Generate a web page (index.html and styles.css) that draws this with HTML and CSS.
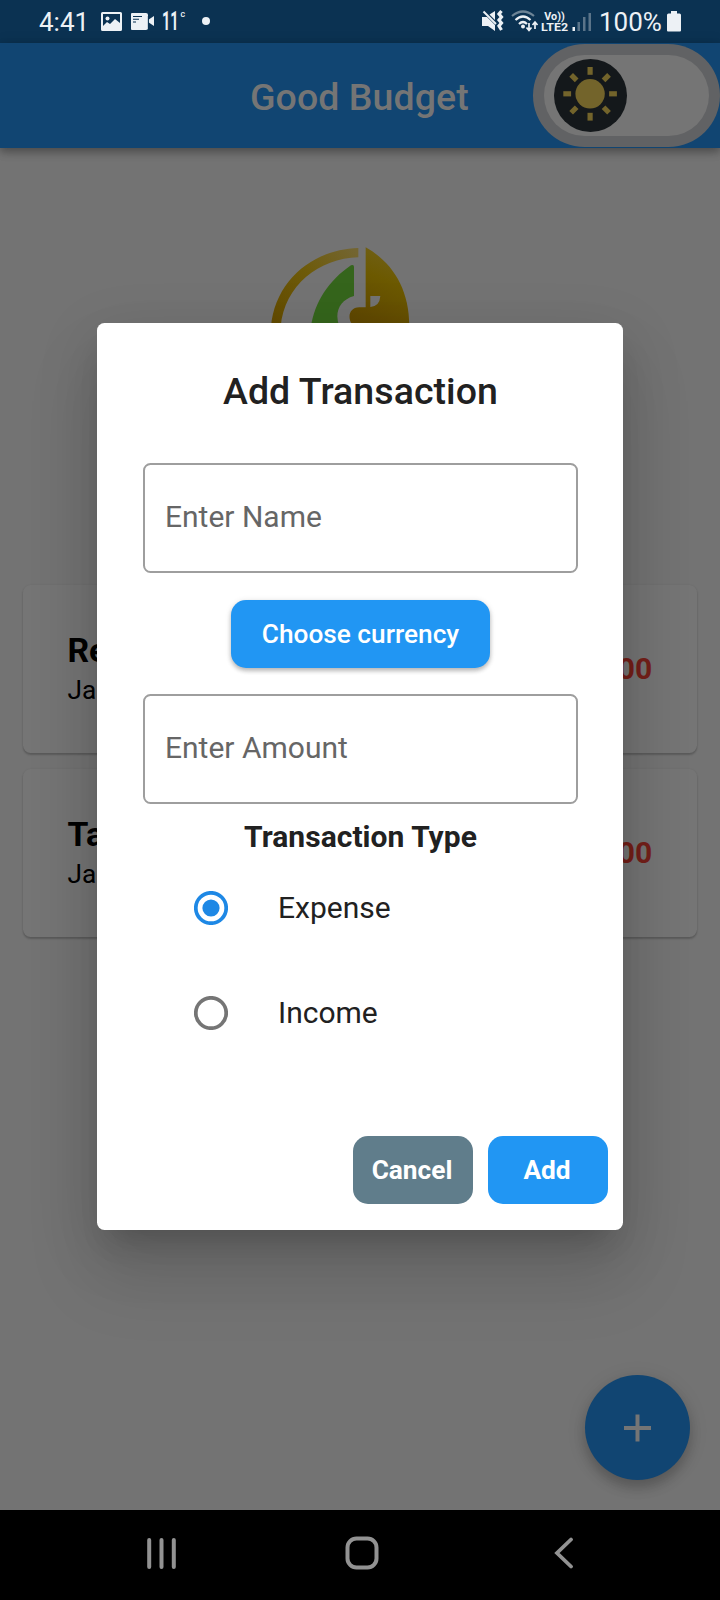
FILE: index.html
```html
<!DOCTYPE html>
<html lang="en">
<head>
<meta charset="utf-8">
<title>Good Budget</title>
<link rel="stylesheet" href="styles.css">
</head>
<body>
<div class="screen">
  <header class="status">
    <span class="clock">4:41</span>
    <svg class="status-left" width="120" height="30" viewBox="0 0 120 30" fill="#edf1f5">
      <path fill-rule="evenodd" d="M2.500 4h18q1.500 0 1.500 1.500v16q0 1.500-1.500 1.500h-18Q1 23 1 21.500v-16Q1 4 2.500 4zM3 6v12l4-4 3 2 5-5 5 4V6z"/>
      <circle cx="7.500" cy="10.500" r="2"/>
      <path d="M32 5h14q2 0 2 2v5l6-4v10l-6-4v6q0 2-2 2H32q-1 0-1-1V6q0-1 1-1z"/>
      <path d="M33 8.500h9M33 11.200h6M33 14h3M48.400 8v12" stroke="#0b3252" stroke-width="1.100"/>
      <text class="temp" x="62" y="22" textLength="16.500" lengthAdjust="spacingAndGlyphs">11</text>
      <text class="degree" x="80.500" y="9">C</text>
      <circle cx="106" cy="13" r="4"/>
    </svg>
    <svg class="status-right" width="112" height="30" viewBox="0 0 112 30" fill="#edf1f5">
      <path d="M1 8h5l8 8v6l-7-5H1zM8.500 5.500L14 2v9z"/>
      <path d="M2.500 2.500L15 15" stroke="#edf1f5" stroke-width="2"/>
      <path d="M20.500 2L18 5l2.500 3L18 11l2.500 3L18 17l2.500 4" fill="none" stroke="#edf1f5" stroke-width="3.200"/>
      <g fill="none" stroke-width="2.200">
        <path d="M31 7Q42 -2 53 7" stroke="#6d8496"/>
        <path d="M34.500 11Q42 4 49.500 11M38 15Q42 11 46 15" stroke="#edf1f5"/>
      </g>
      <circle cx="42" cy="17.500" r="2"/>
      <path d="M48 14v7M45.500 18.500l2.500 3 2.500-3M54 20v-7M51.500 16l2.500-3 2.500 3" fill="none" stroke="#edf1f5" stroke-width="1.700"/>
      <text class="volte" x="63.300" y="10.700" textLength="20.500" lengthAdjust="spacingAndGlyphs">Vo))</text>
      <text class="volte" x="60" y="22.300" textLength="27" lengthAdjust="spacingAndGlyphs">LTE2</text>
      <path d="M91.500 18H94v4h-2.500z"/>
      <path d="M96.500 13H99v9h-2.500zM102 8h2.500v14H102zM107.500 4h2.500v18h-2.500z" fill="#5b7489"/>
    </svg>
    <span class="percent">100%</span>
    <svg class="battery" width="14" height="21" viewBox="0 0 14 21"><path fill="#edf1f5" d="M4 0h6v2.500h2.500q1.500 0 1.500 1.500v15.500q0 1-1 1H1q-1 0-1-1V4q0-1.500 1.500-1.500H4z"/></svg>
  </header>

  <div class="appbar">
    <h1 class="app-title">Good Budget</h1>
    <div class="theme-switch">
      <div class="switch-track">
        <svg class="sun" width="73" height="73" viewBox="-36.500 -36.500 73 73">
          <circle r="36.500" fill="#14181b"/>
          <g fill="#73642b" transform="translate(-.4 -1.700)">
            <circle r="14.700"/>
            <path id="ray" d="M-2.600-26.800h5.200v7.800h-5.200z"/>
            <use href="#ray" transform="rotate(45)"/><use href="#ray" transform="rotate(90)"/>
            <use href="#ray" transform="rotate(135)"/><use href="#ray" transform="rotate(180)"/>
            <use href="#ray" transform="rotate(225)"/><use href="#ray" transform="rotate(270)"/>
            <use href="#ray" transform="rotate(315)"/>
          </g>
        </svg>
      </div>
    </div>
  </div>

  <main class="content">
    <svg class="logo" width="139" height="100" viewBox="92 50 417 300">
      <defs>
        <linearGradient id="ring" gradientUnits="userSpaceOnUse" x1="340" y1="60" x2="100" y2="278"><stop offset="0" stop-color="#736531"/><stop offset=".45" stop-color="#6e5b0a"/><stop offset="1" stop-color="#634b00"/></linearGradient>
        <linearGradient id="gold" gradientUnits="userSpaceOnUse" x1="450" y1="90" x2="370" y2="278"><stop offset="0" stop-color="#6f5e10"/><stop offset=".3" stop-color="#6c5900"/><stop offset="1" stop-color="#5f4700"/></linearGradient>
      </defs>
      <path fill="url(#ring)" d="M92 290C104 150 218 57 354 53V81C237 84 132 165 121 290z"/>
      <path fill="#35651c" d="M212 290C223 215 266 150 332 105Q341 101 341 110V197C308 206 291 230 291 258Q291 272 297 290z"/>
      <path fill="url(#gold)" fill-rule="evenodd" d="M376 51C455 95 508 175 507 290H345C320 275 320 232 357 231H376zM390 197V230Q418 228 420 197z"/>
    </svg>
    <section class="entries">
      <article class="entry"><div><h2 class="entry-name">Re</h2><p class="entry-date">Ja</p></div><span class="entry-sum">00</span></article>
      <article class="entry"><div><h2 class="entry-name">Ta</h2><p class="entry-date">Ja</p></div><span class="entry-sum">00</span></article>
    </section>
  </main>

  <nav class="navbar">
    <svg width="30" height="32" viewBox="0 0 30 32" fill="none" stroke="#929292" stroke-width="4" stroke-linecap="round"><path d="M3.200 3v27M15.500 3v27M27.800 3v27"/></svg>
    <svg class="home" width="34" height="34" viewBox="0 0 34 34" fill="none" stroke="#929292" stroke-width="4"><rect x="2.500" y="2.500" width="29" height="29" rx="9"/></svg>
    <svg width="20" height="32" viewBox="0 0 20 32" fill="none" stroke="#929292" stroke-width="3.800" stroke-linecap="round"><path d="M17 2.500L3 16l14 13.500"/></svg>
  </nav>

  <div class="fab"><svg width="28" height="28" viewBox="0 0 28 28"><path d="M13.500 .5v27M0 14h27" stroke="#757575" stroke-width="4"/></svg></div>

  <div class="dialog" role="dialog">
    <h2 class="dialog-title">Add Transaction</h2>
    <div class="field">Enter Name</div>
    <button class="btn btn-currency">Choose currency</button>
    <div class="field">Enter Amount</div>
    <h3 class="type-title">Transaction Type</h3>
    <div class="option"><svg width="34" height="34" viewBox="-17 -17 34 34"><circle r="15.200" fill="none" stroke="#1e88e5" stroke-width="3.700"/><circle r="8.600" fill="#1e88e5"/></svg><span>Expense</span></div>
    <div class="option"><svg width="34" height="34" viewBox="-17 -17 34 34"><circle r="15.200" fill="none" stroke="#757575" stroke-width="3.700"/></svg><span>Income</span></div>
    <div class="actions">
      <button class="btn btn-cancel">Cancel</button>
      <button class="btn">Add</button>
    </div>
  </div>
</div>
</body>
</html>
```
FILE: styles.css
```css
* { box-sizing: border-box; }
body, h1, h2, h3, p { margin: 0; }
body { font-family: Roboto, sans-serif; }
svg { display: block; flex: none; }

.screen {
  position: relative;
  width: 720px;
  height: 1600px;
  display: flex;
  flex-direction: column;
  background: #737373;
  overflow: hidden;
}

/* Status bar */
.status {
  height: 43px;
  display: flex;
  align-items: flex-start;
  padding-left: 39px;
  background: #0b3252;
  color: #edf1f5;
  font-size: 26px;
  line-height: 30px;
}
.clock { width: 61px; padding-top: 7px; }
.status-left { margin-top: 8px; }
.status-right { margin: 9px 0 0 261px; }
.percent { width: 66px; margin-left: 6px; padding-top: 7px; }
.battery { margin: 11px 0 0 2px; }
.temp { font-size: 25px; font-weight: 700; }
.degree { font-size: 7px; font-weight: 700; }
.volte { font-size: 10.8px; font-weight: 700; }

/* App bar */
.appbar {
  position: relative;
  z-index: 1;
  height: 105px;
  flex: none;
  display: flex;
  align-items: center;
  padding-left: 250px;
  background: #114572;
  box-shadow: 0 4px 8px rgba(0, 0, 0, .28), 0 1px 14px rgba(0, 0, 0, .12);
}
.app-title {
  width: 283px;
  padding-top: 2px;
  font-size: 37.5px;
  font-weight: 500;
  line-height: 44px;
  letter-spacing: .06px;
  color: #757575;
}
.theme-switch {
  width: 187px;
  height: 103px;
  padding: 11px;
  border-radius: 52px;
  background: #616264;
}
.switch-track {
  height: 81px;
  padding: 4px 9.5px;
  border-radius: 41px;
  background: #757575;
}

/* Page content */
.content { flex: 1; padding: 99px 22.5px 0; }
.logo { margin-left: 248px; }
.entries {
  display: flex;
  flex-direction: column;
  gap: 15.5px;
  margin-top: 237.5px;
}
.entry {
  width: 674.8px;
  height: 168.5px;
  display: flex;
  align-items: center;
  justify-content: space-between;
  padding: 0 45px;
  border-radius: 7.5px;
  background: #757575;
  box-shadow: 0 2px 2px rgba(0, 0, 0, .2), 0 0 2px rgba(0, 0, 0, .08);
}
.entry-name { font-size: 33.75px; font-weight: 700; line-height: 40px; color: #000; }
.entry-date { font-size: 26.25px; line-height: 36px; padding-top: 1px; margin-bottom: -1px; color: #000; }
.entry-sum { font-size: 30px; font-weight: 700; color: #741f19; }

/* System navigation */
.navbar {
  height: 90px;
  flex: none;
  display: flex;
  align-items: center;
  justify-content: space-between;
  padding: 0 146px 4px 146px;
  background: #000;
}
.home { margin-right: 6px; }

.fab {
  position: absolute;
  right: 30px;
  bottom: 120px;
  width: 105px;
  height: 105px;
  display: grid;
  place-items: center;
  border-radius: 50%;
  background: #114572;
  box-shadow: 0 8px 12px rgba(0, 0, 0, .18), 0 3px 20px rgba(0, 0, 0, .1);
}

/* Dialog */
.dialog {
  position: absolute;
  z-index: 2;
  left: 97px;
  top: 323px;
  width: 525.5px;
  height: 907px;
  display: flex;
  flex-direction: column;
  align-items: center;
  padding: 46px 15px 0 46px;
  border-radius: 7.5px;
  background: #fff;
  color: #212121;
  box-shadow: 0 20px 28px -13px rgba(0, 0, 0, .16), 0 45px 71px 5px rgba(0, 0, 0, .1), 0 17px 60px 5px rgba(0, 0, 0, .1);
}
.dialog > :not(.actions) { margin-right: 29.5px; }
.dialog-title {
  font-size: 37.5px;
  font-weight: 500;
  line-height: 44px;
  letter-spacing: .06px;
}
.field {
  width: 435px;
  height: 110px;
  flex: none;
  margin-top: 50px;
  padding-left: 20px;
  border: 2px solid #9e9e9e;
  border-radius: 7.5px;
  color: #666;
  font-size: 30px;
  line-height: 104px;
}
.btn {
  width: 120px;
  height: 67.5px;
  padding: 0;
  border: 0;
  border-radius: 15px;
  background: #2196f3;
  color: #fff;
  font: 700 26.25px/67.5px Roboto, sans-serif;
}
.btn-currency {
  width: 259px;
  flex: none;
  margin-top: 27px;
  padding-top: 1px;
  font-weight: 500;
  box-shadow: 0 3px 4px rgba(0, 0, 0, .22), 0 1px 6px rgba(0, 0, 0, .12);
}
.btn-currency + .field { margin-top: 26.5px; }
.type-title { margin-top: 15px; font-size: 30px; font-weight: 700; line-height: 35px; letter-spacing: .04px; }
.option {
  width: 435px;
  height: 105px;
  flex: none;
  display: flex;
  align-items: center;
  gap: 50.5px;
  padding-left: 50.5px;
  font-size: 30px;
}
.type-title + .option { margin-top: 1px; }
.actions { align-self: flex-end; display: flex; gap: 15px; margin-top: 71px; }
.actions .btn { padding: 1px 1px 0 0; }
.btn-cancel { background: #607d8b; }
```
